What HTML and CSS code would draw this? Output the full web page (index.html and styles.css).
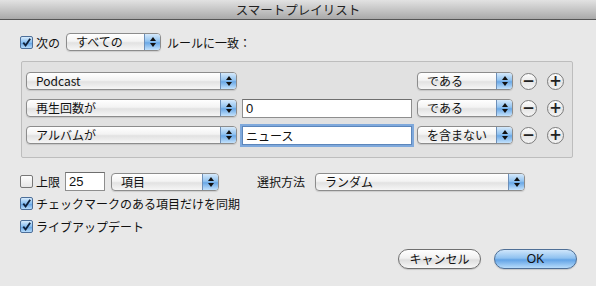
FILE: index.html
```html
<!DOCTYPE html>
<html lang="ja">
<head>
  <meta charset="UTF-8" />
  <title>スマートプレイリスト</title>
  <link rel="stylesheet" href="styles.css">
</head>
<body>
  <div class="window">
    <div class="titlebar">スマートプレイリスト</div>

    <div class="content">
      <div class="match-row">
        <span class="check on"><svg viewBox="0 0 12 12"><path d="M2.5 6.2 L5 9.3 L10 1.8" /></svg></span>
        <span class="label">次の</span>
        <div class="popup w-match"><span class="popup-text">すべての</span><span class="arrows"></span></div>
        <span class="label">ルールに一致：</span>
      </div>

      <div class="rules">
        <div class="rule">
          <div class="popup w-field"><span class="popup-text">Podcast</span><span class="arrows"></span></div>
          <div class="spacer"></div>
          <div class="popup w-op"><span class="popup-text">である</span><span class="arrows"></span></div>
          <span class="round">&minus;</span>
          <span class="round">+</span>
        </div>
        <div class="rule">
          <div class="popup w-field"><span class="popup-text">再生回数が</span><span class="arrows"></span></div>
          <div class="textfield w-value">0</div>
          <div class="popup w-op"><span class="popup-text">である</span><span class="arrows"></span></div>
          <span class="round">&minus;</span>
          <span class="round">+</span>
        </div>
        <div class="rule">
          <div class="popup w-field"><span class="popup-text">アルバムが</span><span class="arrows"></span></div>
          <div class="textfield w-value focused">ニュース</div>
          <div class="popup w-op"><span class="popup-text">を含まない</span><span class="arrows"></span></div>
          <span class="round">&minus;</span>
          <span class="round">+</span>
        </div>
      </div>

      <div class="limit-row">
        <span class="check"></span>
        <span class="label">上限</span>
        <div class="textfield w-limit">25</div>
        <div class="popup w-unit"><span class="popup-text">項目</span><span class="arrows"></span></div>
        <span class="label select-label">選択方法</span>
        <div class="popup w-method"><span class="popup-text">ランダム</span><span class="arrows"></span></div>
      </div>

      <div class="option-row">
        <span class="check on"><svg viewBox="0 0 12 12"><path d="M2.5 6.2 L5 9.3 L10 1.8" /></svg></span>
        <span class="label">チェックマークのある項目だけを同期</span>
      </div>
      <div class="option-row">
        <span class="check on"><svg viewBox="0 0 12 12"><path d="M2.5 6.2 L5 9.3 L10 1.8" /></svg></span>
        <span class="label">ライブアップデート</span>
      </div>

      <div class="buttons">
        <button class="btn">キャンセル</button>
        <button class="btn default">OK</button>
      </div>
    </div>
  </div>
</body>
</html>
```

FILE: styles.css
```css
* {
  box-sizing: border-box;
  margin: 0;
  padding: 0;
}

body {
  background: #e8e8e8;
  font-family: "Noto Sans CJK JP", "Liberation Sans", sans-serif;
  font-size: 12px;
  color: #111;
}

.window {
  width: 596px;
  height: 286px;
  overflow: hidden;
}

.titlebar {
  height: 20px;
  line-height: 19px;
  text-align: center;
  font-size: 12.5px;
  color: #222;
  background: linear-gradient(#e2e2e2, #c6c6c6 50%, #a9a9a9);
  border-bottom: 1px solid #555;
}

.content {
  padding: 12px 0 0 20px;
}

.label {
  white-space: nowrap;
}

/* checkbox */
.check {
  width: 13px;
  height: 13px;
  flex: none;
  border: 1px solid #777;
  border-radius: 2px;
  background: linear-gradient(#fdfdfd, #e6e6e6);
  margin-right: 3px;
  display: inline-flex;
}

.check.on {
  border-color: #4d6f99;
  background: linear-gradient(#d7ebfc, #86bdf0 50%, #5e9fe2 51%, #b5dbfb);
}

.check svg {
  width: 11px;
  height: 11px;
  fill: none;
  stroke: #10223c;
  stroke-width: 2;
}

/* popup buttons */
.popup {
  display: flex;
  align-items: center;
  height: 18px;
  flex: none;
  border: 1px solid #8c8c8c;
  border-radius: 4px;
  background: linear-gradient(#ffffff, #f3f3f3 45%, #e2e2e2 55%, #f6f6f6);
  box-shadow: 0 1px 1px rgba(0, 0, 0, 0.12);
  overflow: hidden;
}

.popup-text {
  flex: 1;
  padding-left: 9px;
  white-space: nowrap;
  line-height: 16px;
}

.arrows {
  position: relative;
  width: 16px;
  height: 100%;
  border-left: 1px solid #6d8fb8;
  background: linear-gradient(#d5e9fb, #92c3f0 45%, #6aa8e6 55%, #c4e2fc);
}

.arrows::before,
.arrows::after {
  content: "";
  position: absolute;
  left: 5px;
  border-left: 3px solid transparent;
  border-right: 3px solid transparent;
}

.arrows::before {
  top: 3px;
  border-bottom: 4px solid #111;
}

.arrows::after {
  bottom: 3px;
  border-top: 4px solid #111;
}

.w-match { width: 95px; margin: 0 6px 0 6px; }
.w-field { width: 211px; }
.w-op { width: 96px; }
.w-unit { width: 108px; margin-left: 6px; }
.w-method { width: 210px; }

/* text fields */
.textfield {
  height: 19px;
  flex: none;
  border: 1px solid #8e8e8e;
  border-top-color: #6e6e6e;
  background: #fff;
  padding-left: 3px;
  line-height: 17px;
  font-family: "Liberation Sans", "Noto Sans CJK JP", sans-serif;
  font-size: 13px;
}

.textfield.focused {
  font-family: "Noto Sans CJK JP", sans-serif;
  font-size: 12px;
  box-shadow: 0 0 0 2px #7fa9dc;
  border-color: #5c86bb;
}

.w-value { width: 170px; margin: 0 5px; }
.w-limit { width: 40px; margin-left: 5px; }

/* rules box */
.match-row {
  display: flex;
  align-items: center;
  height: 20px;
}

.rules {
  width: 552px;
  height: 97px;
  margin: 9px 0 0 1px;
  padding: 10px 0 0 4px;
  border: 1px solid #bdbdbd;
  border-radius: 2px;
  background: #e1e1e1;
  display: flex;
  flex-direction: column;
  gap: 9px;
}

.rule {
  display: flex;
  align-items: center;
  height: 18px;
}

.spacer {
  width: 180px;
  flex: none;
}

.round {
  width: 17px;
  height: 17px;
  flex: none;
  margin-left: 7px;
  border: 1px solid #7b7b7b;
  border-radius: 50%;
  background: linear-gradient(#fefefe, #e6e6e6 55%, #f4f4f4);
  display: flex;
  align-items: center;
  justify-content: center;
  font-family: "DejaVu Sans", sans-serif;
  font-size: 15px;
  font-weight: bold;
  line-height: 1;
  color: #222;
}

.round + .round {
  margin-left: 10px;
}

/* bottom options */
.limit-row {
  display: flex;
  align-items: center;
  height: 19px;
  margin-top: 14px;
}

.select-label {
  margin: 0 10px 0 38px;
}

.option-row {
  display: flex;
  align-items: center;
  height: 16px;
  margin-top: 4px;
}

.option-row + .option-row {
  margin-top: 7px;
}

.buttons {
  display: flex;
  justify-content: flex-end;
  gap: 13px;
  width: 557px;
  margin-top: 15px;
}

.btn {
  height: 20px;
  width: 83px;
  border: 1px solid #6f6f6f;
  border-radius: 10px;
  background: linear-gradient(#ffffff, #f1f1f1 45%, #dedede 55%, #f7f7f7);
  font-family: "Noto Sans CJK JP", sans-serif;
  font-size: 12px;
  color: #111;
  line-height: 18px;
  box-shadow: 0 1px 1px rgba(0, 0, 0, 0.15);
}

.btn.default {
  border-color: #4f6f96;
  background: linear-gradient(#cfe6fb, #8fc1f0 45%, #62a3e6 55%, #b7dcfb);
  font-family: "Liberation Sans", sans-serif;
}
```
